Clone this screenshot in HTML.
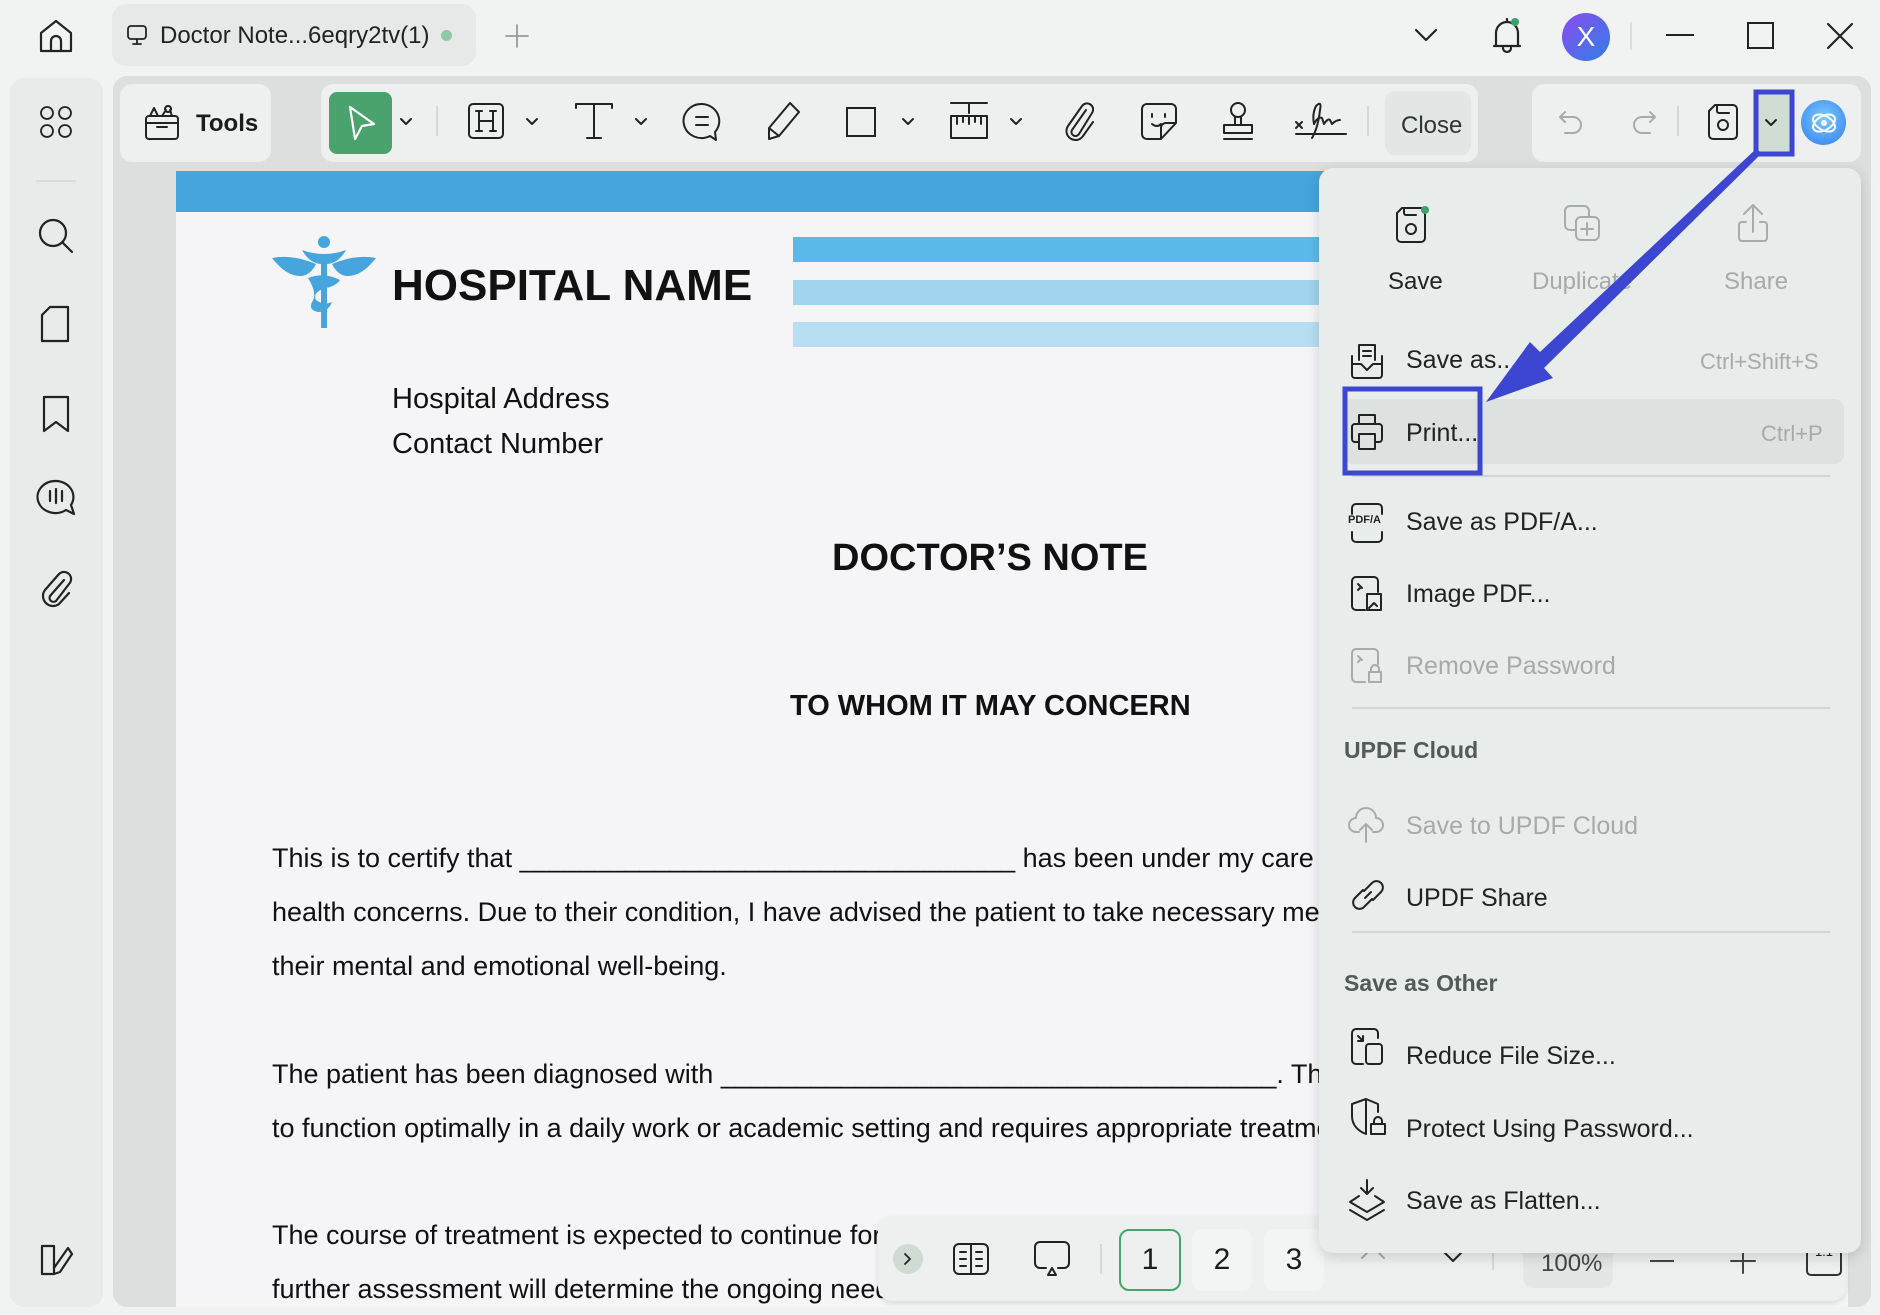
<!DOCTYPE html>
<html><head><meta charset="utf-8"><style>
*{margin:0;padding:0;box-sizing:border-box}
body{width:1880px;height:1315px;overflow:hidden;background:#f1f3f2;font-family:"Liberation Sans",sans-serif;color:#1c1c1c;position:relative}
.a{position:absolute}
svg.i{position:absolute;fill:none;stroke:#222;stroke-width:2.2;stroke-linecap:round;stroke-linejoin:round}
.t{position:absolute;white-space:nowrap}
.mi{position:absolute;left:1406px;font-size:25px;color:#222;white-space:nowrap}
.gr{color:#a7aaa9}
.sep{position:absolute;height:2px;background:#d3d6d5}
.doc{position:absolute;left:272px;font-size:27px;color:#111;white-space:nowrap}
</style></head><body>

<!-- title bar -->
<svg class="i" style="left:36px;top:16px" width="40" height="40" viewBox="0 0 40 40"><path d="M5 17 L20 5 L35 17 V35 H5 Z"/><path d="M15 35 V25 a5 5 0 0 1 10 0 V35"/></svg>
<div class="a" style="left:112px;top:4px;width:364px;height:62px;background:#e6e9e8;border-radius:14px"></div>
<svg class="i" style="left:126px;top:24px;stroke-width:1.8" width="22" height="22" viewBox="0 0 22 22"><rect x="2" y="2" width="18" height="13" rx="3"/><path d="M11 15 v5 M7 20 h8"/></svg>
<div class="t" style="left:160px;top:22px;font-size:24px;color:#222">Doctor Note...6eqry2tv(1)</div>
<div class="a" style="left:441px;top:30px;width:11px;height:11px;border-radius:50%;background:#8fcaa6"></div>
<svg class="i" style="left:505px;top:24px;stroke:#999;stroke-width:1.8" width="24" height="24" viewBox="0 0 24 24"><path d="M12 1v22M1 12h22"/></svg>
<svg class="i" style="left:1414px;top:28px" width="24" height="14" viewBox="0 0 24 14"><path d="M2 2l10 10 10-10"/></svg>
<svg class="i" style="left:1490px;top:16px" width="34" height="40" viewBox="0 0 34 40"><path d="M6 30 V17 a11 11 0 0 1 22 0 V30 H4 H30 M17 3 v3 M13 32 a4 4 0 0 0 8 0"/></svg>
<div class="a" style="left:1511px;top:18px;width:8px;height:8px;border-radius:50%;background:#3aa36b"></div>
<div class="a" style="left:1562px;top:13px;width:48px;height:48px;border-radius:50%;background:linear-gradient(135deg,#8b4cf0,#2e7fe6);color:#fff;font-size:28px;text-align:center;line-height:48px">X</div>
<div class="a" style="left:1630px;top:22px;width:2px;height:28px;background:#ddd"></div>
<div class="a" style="left:1666px;top:34px;width:28px;height:2px;background:#222"></div>
<div class="a" style="left:1747px;top:22px;width:27px;height:27px;border:2px solid #222"></div>
<svg class="i" style="left:1826px;top:22px" width="28" height="28" viewBox="0 0 28 28"><path d="M2 2l24 24M26 2L2 26"/></svg>

<!-- left sidebar -->
<div class="a" style="left:10px;top:78px;width:93px;height:1229px;background:#e8ebea;border-radius:14px"></div>
<svg class="i" style="left:38px;top:104px;stroke-width:1.8" width="36" height="36" viewBox="0 0 36 36"><circle cx="9" cy="9" r="6"/><circle cx="27" cy="9" r="6"/><circle cx="9" cy="27" r="6"/><circle cx="27" cy="27" r="6"/></svg>
<div class="a" style="left:36px;top:180px;width:40px;height:2px;background:#d8dbda"></div>
<svg class="i" style="left:36px;top:216px" width="40" height="40" viewBox="0 0 40 40"><circle cx="17" cy="17" r="13"/><path d="M27 27l9 9"/></svg>
<svg class="i" style="left:38px;top:304px" width="36" height="40" viewBox="0 0 36 40"><path d="M12 3 H30 V37 H4 V11 Z"/></svg>
<svg class="i" style="left:40px;top:394px" width="32" height="40" viewBox="0 0 32 40"><path d="M4 3 H28 V37 L16 28 L4 37 Z"/></svg>
<svg class="i" style="left:34px;top:478px" width="44" height="40" viewBox="0 0 44 40"><path d="M22 3 a18 16 0 1 0 10 29 L40 36 L37 27 A18 16 0 0 0 22 3Z M16 13v10 M22 11v14 M28 13v10"/></svg>
<svg class="i" style="left:38px;top:568px" width="36" height="42" viewBox="0 0 36 42"><path d="M26 12 L12 28 a4 4 0 0 0 6 5 L31 16 a7 7 0 0 0-10-10 L7 22 a10 10 0 0 0 14 14 L31 25"/></svg>
<svg class="i" style="left:38px;top:1240px" width="38" height="38" viewBox="0 0 38 38"><path d="M4 6 H16 V34 H4 Z M16 28 L30 8 L34 14 L22 32 L16 34"/></svg>

<!-- main area -->
<div class="a" style="left:113px;top:76px;width:1758px;height:1231px;background:#dcdfde;border-radius:14px"></div>
<div class="a" style="left:120px;top:84px;width:151px;height:78px;background:#edf0ef;border-radius:12px"></div>
<svg class="i" style="left:142px;top:100px;stroke-width:2" width="40" height="42" viewBox="0 0 40 42"><rect x="4" y="16" width="32" height="23" rx="3"/><path d="M4 23 H36 M15 27 h10 M8 16 l4-8 4 8 M20 16 l4-6 M30 16 l-2-6 M26 6 a3 3 0 1 0 0.1 0"/></svg>
<div class="t" style="left:196px;top:110px;font-size:24px;font-weight:bold">Tools</div>

<div class="a" style="left:321px;top:84px;width:1157px;height:78px;background:#edf0ef;border-radius:12px"></div>
<div class="a" style="left:329px;top:92px;width:63px;height:62px;background:#4aa36c;border-radius:8px"></div>
<svg class="i" style="left:346px;top:104px;stroke:#fff" width="32" height="38" viewBox="0 0 32 38"><path d="M4 3 L28 20 L16 22 L9 35 Z"/></svg>
<svg class="i" style="left:399px;top:117px;stroke-width:2" width="14" height="10" viewBox="0 0 14 10"><path d="M2 2l5 5 5-5"/></svg>
<div class="a" style="left:436px;top:106px;width:2px;height:30px;background:#d5d8d7"></div>
<svg class="i" style="left:467px;top:102px;stroke-width:2" width="38" height="38" viewBox="0 0 38 38"><rect x="2" y="2" width="34" height="34" rx="4"/><path d="M12 9v20M26 9v20M12 19h14M9 9h6M23 9h6M9 29h6M23 29h6"/></svg>
<svg class="i" style="left:525px;top:117px;stroke-width:2" width="14" height="10" viewBox="0 0 14 10"><path d="M2 2l5 5 5-5"/></svg>
<svg class="i" style="left:574px;top:102px;stroke-width:2" width="40" height="38" viewBox="0 0 40 38"><path d="M2 6V2H38V6M20 2V36M13 36H27"/></svg>
<svg class="i" style="left:634px;top:117px;stroke-width:2" width="14" height="10" viewBox="0 0 14 10"><path d="M2 2l5 5 5-5"/></svg>
<svg class="i" style="left:682px;top:102px;stroke-width:2" width="40" height="40" viewBox="0 0 40 40"><path d="M20 2 a18 17 0 1 0 8 32 L34 38 L33 30 A18 17 0 0 0 20 2Z M14 15h12M14 23h12"/></svg>
<svg class="i" style="left:764px;top:100px;stroke-width:2" width="38" height="42" viewBox="0 0 38 42"><path d="M26 3 L35 12 L15 36 L5 39 L5 28 Z M5 28 L15 36"/></svg>
<div class="a" style="left:846px;top:107px;width:30px;height:30px;border:2px solid #222"></div>
<svg class="i" style="left:901px;top:117px;stroke-width:2" width="14" height="10" viewBox="0 0 14 10"><path d="M2 2l5 5 5-5"/></svg>
<svg class="i" style="left:948px;top:100px;stroke-width:2" width="42" height="42" viewBox="0 0 42 42"><path d="M3 3h36M21 3v10M3 16h36v22H3Z M9 16v8M15 16v6M21 16v8M27 16v6M33 16v8"/></svg>
<svg class="i" style="left:1009px;top:117px;stroke-width:2" width="14" height="10" viewBox="0 0 14 10"><path d="M2 2l5 5 5-5"/></svg>
<svg class="i" style="left:1062px;top:100px;stroke-width:2" width="36" height="42" viewBox="0 0 36 42"><path d="M24 10 L10 30 a4 4 0 0 0 7 4 L30 13 a6 6 0 0 0-10-7 L6 26 a9 9 0 0 0 15 10 L31 22"/></svg>
<svg class="i" style="left:1139px;top:101px;stroke-width:2" width="40" height="40" viewBox="0 0 40 40"><path d="M22 38 H8 a5 5 0 0 1-5-5 V8 a5 5 0 0 1 5-5 H32 a5 5 0 0 1 5 5 V22 Z M22 38 V27 a5 5 0 0 1 5-5 H37 M13 13v3M26 13v3M13 23 q5 4 9 0"/></svg>
<svg class="i" style="left:1219px;top:100px;stroke-width:2" width="38" height="42" viewBox="0 0 38 42"><circle cx="19" cy="10" r="7"/><path d="M16 17v8h6v-8M5 25h28v8H5Z M5 39h28"/></svg>
<svg class="i" style="left:1294px;top:100px;stroke-width:2" width="54" height="42" viewBox="0 0 54 42"><path d="M2 22l6 6M8 22l-6 6M2 34H52M18 38 q6-10 8-28 q2-10 -4-4 q-4 8 -2 18 q4-8 8-6 l2 6 q4-6 6-4 l2 4 q4-4 8-4"/></svg>
<div class="a" style="left:1367px;top:106px;width:2px;height:30px;background:#d5d8d7"></div>
<div class="a" style="left:1385px;top:91px;width:86px;height:64px;background:#e2e6e4;border-radius:10px"></div>
<div class="t" style="left:1401px;top:112px;font-size:24px;color:#333">Close</div>

<div class="a" style="left:1532px;top:84px;width:329px;height:78px;background:#edf0ef;border-radius:12px"></div>
<svg class="i" style="left:1557px;top:108px;stroke:#aaa;stroke-width:2" width="28" height="28" viewBox="0 0 28 28"><path d="M8 4L3 9l5 5M3 9h13a8 8 0 0 1 0 16H8"/></svg>
<svg class="i" style="left:1630px;top:108px;stroke:#aaa;stroke-width:2" width="28" height="28" viewBox="0 0 28 28"><path d="M20 4l5 5-5 5M25 9H12a8 8 0 0 0 0 16h8"/></svg>
<div class="a" style="left:1677px;top:106px;width:2px;height:30px;background:#d5d8d7"></div>
<svg class="i" style="left:1707px;top:103px;stroke-width:2" width="32" height="38" viewBox="0 0 32 38"><path d="M8 2H26a4 4 0 0 1 4 4V32a4 4 0 0 1-4 4H6a4 4 0 0 1-4-4V8Z M10 2v6a2 2 0 0 0 2 2h10"/><circle cx="16" cy="22" r="5"/></svg>
<div class="a" style="left:1758px;top:94px;width:32px;height:58px;background:#cfddd4"></div>
<svg class="i" style="left:1764px;top:118px;stroke-width:2" width="14" height="10" viewBox="0 0 14 10"><path d="M2 2l5 5 5-5"/></svg>
<div class="a" style="left:1801px;top:100px;width:45px;height:45px;border-radius:50%;background:radial-gradient(circle at 50% 40%,#7cc9ff,#2f7ef0)"></div>
<svg class="i" style="left:1809px;top:108px;stroke:#fff;stroke-width:2" width="30" height="30" viewBox="0 0 30 30"><ellipse cx="15" cy="15" rx="12" ry="7" transform="rotate(-30 15 15)"/><ellipse cx="15" cy="15" rx="12" ry="7" transform="rotate(30 15 15)"/><circle cx="15" cy="15" r="2" fill="#fff"/></svg>

<!-- page -->
<div class="a" style="left:176px;top:171px;width:1672px;height:1136px;background:#f5f5f7"></div>
<div class="a" style="left:176px;top:171px;width:1672px;height:41px;background:#45a5dc"></div>
<svg class="a" style="left:272px;top:232px" width="104" height="100" viewBox="0 0 104 100"><g fill="#45a5dc"><circle cx="52" cy="10" r="6"/><path d="M30 18 q22 8 44 0 q-8 14 -20 14 h-4 q-12 0 -20 -14Z"/><path d="M0 26 q20 -4 44 6 q-6 12 -16 12 q-14 0 -28 -18Z"/><path d="M104 26 q-20 -4 -44 6 q6 12 16 12 q14 0 28 -18Z"/><rect x="49" y="28" width="6" height="68"/><path d="M36 46 q16 -6 32 2 q-4 6 -14 8 q-14 4 -10 12 q8 6 16 2 q-4 10 -14 10 q-10 -2 -6 -10 q6 -8 -4 -24Z"/></g></svg>
<div class="t" style="left:392px;top:261px;font-size:44px;font-weight:bold;color:#111">HOSPITAL NAME</div>
<div class="a" style="left:793px;top:237px;width:1055px;height:25px;background:#5cbaeb"></div>
<div class="a" style="left:793px;top:280px;width:1055px;height:25px;background:#a0d4ef"></div>
<div class="a" style="left:793px;top:322px;width:1055px;height:25px;background:#b7def2"></div>
<div class="t" style="left:392px;top:383px;font-size:29px;color:#111">Hospital Address</div>
<div class="t" style="left:392px;top:428px;font-size:29px;color:#111">Contact Number</div>
<div class="t" style="left:832px;top:537px;font-size:38px;font-weight:bold;color:#111">DOCTOR’S NOTE</div>
<div class="t" style="left:790px;top:690px;font-size:29px;font-weight:bold;color:#111">TO WHOM IT MAY CONCERN</div>
<div class="doc" style="top:843px">This is to certify that _________________________________ has been under my care for</div>
<div class="doc" style="top:897px">health concerns. Due to their condition, I have advised the patient to take necessary measures for</div>
<div class="doc" style="top:951px">their mental and emotional well-being.</div>
<div class="doc" style="top:1059px">The patient has been diagnosed with _____________________________________. This</div>
<div class="doc" style="top:1113px">to function optimally in a daily work or academic setting and requires appropriate treatment.</div>
<div class="doc" style="top:1220px">The course of treatment is expected to continue for</div>
<div class="doc" style="top:1274px">further assessment will determine the ongoing need</div>

<!-- bottom bar -->
<div class="a" style="left:878px;top:1217px;width:968px;height:84px;background:#edf0ef;border-radius:14px;box-shadow:0 2px 6px rgba(0,0,0,.12)"></div>
<div class="a" style="left:893px;top:1244px;width:30px;height:30px;border-radius:50%;background:#cfdbd3"></div>
<svg class="i" style="left:903px;top:1252px;stroke-width:1.8" width="10" height="14" viewBox="0 0 10 14"><path d="M2 2l5 5-5 5"/></svg>
<svg class="i" style="left:952px;top:1242px;stroke-width:2" width="38" height="34" viewBox="0 0 38 34"><rect x="2" y="2" width="34" height="30" rx="5"/><path d="M19 2v30M8 10h6M8 17h6M8 24h6M24 10h6M24 17h6M24 24h6"/></svg>
<svg class="i" style="left:1032px;top:1240px;stroke-width:2" width="40" height="38" viewBox="0 0 40 38"><path d="M14 28H8a5 5 0 0 1-5-5V7a5 5 0 0 1 5-5H32a5 5 0 0 1 5 5V23a5 5 0 0 1-5 5H26 M20 28l-4 7h8Z"/></svg>
<div class="a" style="left:1100px;top:1244px;width:2px;height:30px;background:#d5d8d7"></div>
<div class="a" style="left:1119px;top:1229px;width:62px;height:62px;border:2px solid #4aa36c;border-radius:10px;text-align:center;line-height:58px;font-size:30px">1</div>
<div class="a" style="left:1192px;top:1229px;width:60px;height:62px;background:#f3f5f4;border-radius:10px;text-align:center;line-height:62px;font-size:30px">2</div>
<div class="a" style="left:1264px;top:1229px;width:60px;height:62px;background:#f3f5f4;border-radius:10px;text-align:center;line-height:62px;font-size:30px">3</div>
<svg class="i" style="left:1360px;top:1244px;stroke:#aaa;stroke-width:2" width="26" height="16" viewBox="0 0 26 16"><path d="M2 14L13 3l11 11"/></svg>
<svg class="i" style="left:1440px;top:1248px;stroke-width:2" width="26" height="16" viewBox="0 0 26 16"><path d="M2 2l11 11 11-11"/></svg>
<div class="a" style="left:1492px;top:1240px;width:2px;height:30px;background:#d5d8d7"></div>
<div class="a" style="left:1523px;top:1230px;width:90px;height:58px;background:#e3e6e5;border-radius:10px"></div>
<div class="t" style="left:1541px;top:1250px;font-size:24px;color:#444">100%</div>
<div class="a" style="left:1650px;top:1260px;width:24px;height:2px;background:#444"></div>
<svg class="i" style="left:1730px;top:1248px;stroke:#444;stroke-width:2" width="26" height="26" viewBox="0 0 26 26"><path d="M13 1v24M1 13h24"/></svg>
<div class="a" style="left:1806px;top:1240px;width:36px;height:36px;border:2px solid #333;border-radius:5px;font-size:13px;text-align:center;line-height:20px">1:1</div>

<!-- menu -->
<div class="a" style="left:1319px;top:168px;width:542px;height:1085px;background:#e8ecea;border-radius:14px;box-shadow:0 4px 14px rgba(0,0,0,.15)"></div>
<svg class="i" style="left:1394px;top:204px;stroke-width:2" width="34" height="40" viewBox="0 0 34 40"><path d="M8 4H27a4 4 0 0 1 4 4V34a4 4 0 0 1-4 4H7a4 4 0 0 1-4-4V9Z M10 4v5a2 2 0 0 0 2 2h10"/><circle cx="17" cy="25" r="5"/></svg>
<div class="a" style="left:1421px;top:206px;width:8px;height:8px;border-radius:50%;background:#3aa36b"></div>
<div class="t" style="left:1388px;top:268px;font-size:24px;color:#222">Save</div>
<svg class="i" style="left:1563px;top:204px;stroke:#aaa;stroke-width:2" width="38" height="38" viewBox="0 0 38 38"><rect x="2" y="2" width="24" height="24" rx="5"/><rect x="13" y="13" width="23" height="23" rx="5" fill="#e8ecea"/><path d="M24 19v12M18 25h12"/></svg>
<div class="t gr" style="left:1532px;top:268px;font-size:24px">Duplicate</div>
<svg class="i" style="left:1736px;top:202px;stroke:#aaa;stroke-width:2" width="34" height="42" viewBox="0 0 34 42"><path d="M17 30V3M8 12l9-9 9 9M10 20H6a3 3 0 0 0-3 3V36a3 3 0 0 0 3 3H28a3 3 0 0 0 3-3V23a3 3 0 0 0-3-3h-4"/></svg>
<div class="t gr" style="left:1724px;top:268px;font-size:24px">Share</div>

<svg class="i" style="left:1349px;top:342px;stroke-width:2" width="36" height="38" viewBox="0 0 36 38"><path d="M10 18V3H26V18M14 9h8M14 14h8M3 14V33a3 3 0 0 0 3 3H30a3 3 0 0 0 3-3V14 M3 22h9l6 6 6-6h9"/></svg>
<div class="mi" style="top:346px">Save as...</div>
<div class="t gr" style="left:1700px;top:349px;font-size:22px">Ctrl+Shift+S</div>

<div class="a" style="left:1343px;top:399px;width:501px;height:65px;background:#dde1df;border-radius:10px"></div>
<svg class="i" style="left:1349px;top:412px;stroke-width:2" width="36" height="40" viewBox="0 0 36 40"><path d="M10 12V3H26V12 M10 30H6a3 3 0 0 1-3-3V15a3 3 0 0 1 3-3H30a3 3 0 0 1 3 3V27a3 3 0 0 1-3 3h-4 M10 22H26V37H10Z"/></svg>
<div class="mi" style="top:419px">Print...</div>
<div class="t gr" style="left:1761px;top:421px;font-size:22px">Ctrl+P</div>
<div class="sep" style="left:1352px;top:475px;width:478px"></div>

<svg class="i" style="left:1349px;top:502px;stroke-width:2" width="36" height="42" viewBox="0 0 36 42"><path d="M3 12V6a4 4 0 0 1 4-4H29a4 4 0 0 1 4 4V12 M3 30V36a4 4 0 0 0 4 4H29a4 4 0 0 0 4-4V30"/></svg>
<div class="t" style="left:1348px;top:514px;font-size:11px;font-weight:bold;color:#222">PDF/A</div>
<div class="mi" style="top:508px">Save as PDF/A...</div>
<svg class="i" style="left:1349px;top:574px;stroke-width:2" width="36" height="40" viewBox="0 0 36 40"><path d="M16 36H7a4 4 0 0 1-4-4V7a4 4 0 0 1 4-4H25a4 4 0 0 1 4 4V18 M18 20h14v16H18Z M20 34l5-5 3 3 M9 10l4 4M9 16l3-3"/></svg>
<div class="mi" style="top:580px">Image PDF...</div>
<svg class="i" style="left:1349px;top:646px;stroke:#aaa;stroke-width:2" width="36" height="40" viewBox="0 0 36 40"><path d="M16 36H7a4 4 0 0 1-4-4V7a4 4 0 0 1 4-4H25a4 4 0 0 1 4 4V18 M20 26h12v10H20Z M22 26v-3a4 4 0 0 1 8 0v3 M9 10l4 4M9 16l3-3"/></svg>
<div class="mi gr" style="top:652px">Remove Password</div>
<div class="sep" style="left:1352px;top:707px;width:478px"></div>

<div class="t" style="left:1344px;top:737px;font-size:23px;font-weight:bold;color:#545a57">UPDF Cloud</div>
<svg class="i" style="left:1347px;top:804px;stroke:#aaa;stroke-width:2" width="38" height="40" viewBox="0 0 38 40"><path d="M12 28H9a7 7 0 0 1 0-14 a10 10 0 0 1 20 0 a7 7 0 0 1 0 14h-3 M19 38V20M13 26l6-6 6 6"/></svg>
<div class="mi gr" style="top:812px">Save to UPDF Cloud</div>
<svg class="i" style="left:1349px;top:876px;stroke-width:2" width="38" height="38" viewBox="0 0 38 38"><path d="M16 22l6-6 M14 14l-8 8a6 6 0 0 0 9 9l8-8 M24 24l8-8a6 6 0 0 0-9-9l-8 8"/></svg>
<div class="mi" style="top:884px">UPDF Share</div>
<div class="sep" style="left:1352px;top:931px;width:478px"></div>

<div class="t" style="left:1344px;top:970px;font-size:23px;font-weight:bold;color:#545a57">Save as Other</div>
<svg class="i" style="left:1349px;top:1026px;stroke-width:2" width="36" height="40" viewBox="0 0 36 40"><path d="M14 38H7a4 4 0 0 1-4-4V7a4 4 0 0 1 4-4H25a4 4 0 0 1 4 4V12 M20 18h10a3 3 0 0 1 3 3V35a3 3 0 0 1-3 3H20a3 3 0 0 1-3-3V21a3 3 0 0 1 3-3Z M9 10l5 5M14 10v5H9"/></svg>
<div class="mi" style="top:1042px">Reduce File Size...</div>
<svg class="i" style="left:1349px;top:1096px;stroke-width:2" width="38" height="40" viewBox="0 0 38 40"><path d="M17 3 L3 8 V20 c0 9 6 15 14 18 V3 L29 8 V16 M22 28h14v10H22Z M25 28v-3a4 4 0 0 1 8 0v3"/></svg>
<div class="mi" style="top:1115px">Protect Using Password...</div>
<svg class="i" style="left:1347px;top:1178px;stroke-width:2" width="40" height="44" viewBox="0 0 40 44"><path d="M20 2V16M14 10l6 6 6-6 M12 18L3 24l17 10 17-10-9-6 M3 32l17 10 17-10"/></svg>
<div class="mi" style="top:1187px">Save as Flatten...</div>

<!-- annotations -->
<svg class="a" style="left:0;top:0" width="1880" height="1315" viewBox="0 0 1880 1315">
<rect x="1756" y="92" width="36" height="62" fill="none" stroke="#3d46d1" stroke-width="5"/>
<rect x="1345" y="389" width="135" height="84" fill="none" stroke="#3d46d1" stroke-width="5"/>
<path d="M1757 148 L1540 352 L1530 342 L1486 402 L1553 378 L1544 368 L1761 154 Z" fill="#3d46d1"/>
</svg>
</body></html>
